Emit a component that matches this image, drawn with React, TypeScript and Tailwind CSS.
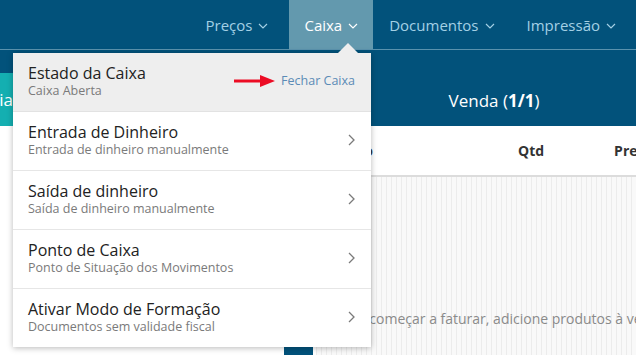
import React from 'react';

const font = { fontFamily: '"Open Sans", "Noto Sans", sans-serif' };

function Chevron({ className = '' }: { className?: string }) {
  return (
    <svg width="10" height="6" viewBox="0 0 10 6" className={className} fill="none">
      <path d="M1 1l4 4 4-4" stroke="currentColor" strokeWidth="1.2" />
    </svg>
  );
}

function RowArrow() {
  return (
    <svg width="7" height="12" viewBox="0 0 7 12" fill="none">
      <path d="M1 1l5 5-5 5" stroke="#7a7a7a" strokeWidth="1.3" />
    </svg>
  );
}

const navItems = [
  { label: 'Preços', active: false, cls: 'pl-[15px] pr-[15px] mr-[6px]' },
  { label: 'Caixa', active: true, cls: 'px-[15px]' },
  { label: 'Documentos', active: false, cls: 'pl-[16px] pr-[17px]' },
  { label: 'Impressão', active: false, cls: 'pl-[15px] pr-[20px]' },
];

const menuRows = [
  { title: 'Entrada de Dinheiro', sub: 'Entrada de dinheiro manualmente' },
  { title: 'Saída de dinheiro', sub: 'Saída de dinheiro manualmente' },
  { title: 'Ponto de Caixa', sub: 'Ponto de Situação dos Movimentos' },
  { title: 'Ativar Modo de Formação', sub: 'Documentos sem validade fiscal' },
];

function CaixaMenu() {
  return (
    <div className="absolute left-[13px] top-[53px] w-[358px] bg-white shadow-[0_1px_6px_rgba(0,0,0,0.28)]">
      {/* caret */}
      <div className="absolute -top-[10px] left-[325px] w-0 h-0 border-l-[10px] border-r-[10px] border-b-[10px] border-l-transparent border-r-transparent border-b-[#eeeeee]" />
      <div className="flex items-center bg-[#eeeeee] border-b border-[#e2e2e2] pl-[15px] pr-[16px] pt-[10px] pb-[12px]">
        <div className="flex-1">
          <p className="text-[16px] leading-[20px] text-[#222]">Estado da Caixa</p>
          <p className="text-[12.5px] leading-[16px] text-[#7a7a7a]">Caixa Aberta</p>
        </div>
        <svg width="41" height="14" viewBox="0 0 41 14" className="mr-[6px]">
          <rect x="0" y="5.5" width="27" height="3" fill="#ec0c24" />
          <path d="M26 1l15 6-15 6z" fill="#ec0c24" />
        </svg>
        <span className="text-[12.5px] text-[#5b8bb6]">Fechar Caixa</span>
      </div>
      {menuRows.map((r, i) => (
        <div
          key={r.title}
          className={`flex items-center pl-[15px] pr-[16px] pt-[10px] pb-[12px] ${i < menuRows.length - 1 ? 'border-b border-[#e6e6e6]' : ''}`}
        >
          <div className="flex-1">
            <p className="text-[16px] leading-[20px] text-[#222]">{r.title}</p>
            <p className="text-[12.5px] leading-[16px] text-[#7a7a7a]">{r.sub}</p>
          </div>
          <RowArrow />
        </div>
      ))}
    </div>
  );
}

export default function App() {
  return (
    <div className="relative w-[636px] h-[355px] overflow-hidden bg-white" style={font}>
      {/* top bar */}
      <header className="h-[50px] bg-[#02527b] border-b border-[#5a92ad] flex justify-end">
        {navItems.map((n) => (
          <div
            key={n.label}
            className={`flex items-center gap-[6px] pt-[2px] text-[15px] ${n.cls} ${
              n.active ? 'bg-[#6399ae] text-white' : 'text-[#a3d0e5]'
            }`}
          >
            {n.label}
            <Chevron />
          </div>
        ))}
      </header>

      {/* blue band */}
      <div className="h-[76px] bg-[#02527b] flex">
        <div className="w-[13px] shrink-0 mt-[23px] bg-[#14afb1] text-white text-[17px] leading-[53px] overflow-hidden whitespace-nowrap flex justify-end">
          ia
        </div>
        <div className="flex-1 flex items-end justify-center pl-[339px] pb-[13px] text-white text-[17px]">
          <span>
            Venda (<b>1/1</b>)
          </span>
        </div>
      </div>

      {/* body */}
      <div className="flex h-[229px]">
        <div className="w-[284px] shrink-0 bg-white" />
        <div className="w-[29px] shrink-0 flex flex-col">
          <div className="flex-1 bg-white" />
          <div className="h-[10px] bg-[#02527b]" />
        </div>
        <div className="flex-1 min-w-0 overflow-hidden flex flex-col">
          <div className="h-[49px] flex items-center text-[14px] font-bold text-[#333] whitespace-nowrap">
            <span className="w-[60px] shrink-0 text-right">Produto</span>
            <span className="ml-[145px]">Qtd</span>
            <span className="ml-[70px]">Preço</span>
          </div>
          <div className="h-[2px] bg-[#dcdcdc]" />
          <div className="flex-1 ml-[3px] bg-[repeating-linear-gradient(90deg,#ececec_0_1px,#f9f9f9_1px_5px)] pt-[131px] pl-[20px] text-[14px] text-[#8a8a8a] whitespace-nowrap">
            Para começar a faturar, adicione produtos à venda
          </div>
        </div>
      </div>

      <CaixaMenu />
    </div>
  );
}
